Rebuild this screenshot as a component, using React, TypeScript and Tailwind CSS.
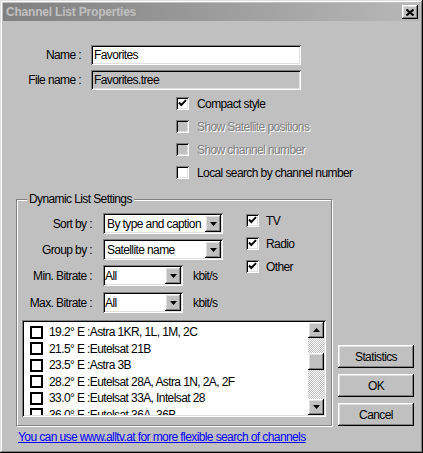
import React from "react";

// Win98-style bevels
const sunken =
  "shadow-[inset_1px_1px_0_#808080,inset_-1px_-1px_0_#ffffff,inset_2px_2px_0_#000000,inset_-2px_-2px_0_#dfdfdf]";
const raised =
  "shadow-[inset_-1px_-1px_0_#000000,inset_1px_1px_0_#ffffff,inset_-2px_-2px_0_#808080,inset_2px_2px_0_#dfdfdf]";

const satellites = [
  "19.2° E :Astra 1KR, 1L, 1M, 2C",
  "21.5° E :Eutelsat 21B",
  "23.5° E :Astra 3B",
  "28.2° E :Eutelsat 28A, Astra 1N, 2A, 2F",
  "33.0° E :Eutelsat 33A, Intelsat 28",
  "36.0° E :Eutelsat 36A, 36B",
];

function Check() {
  return (
    <svg width="9" height="9" viewBox="0 0 9 9" className="absolute left-[2px] top-[2px]">
      <path d="M1 3.5 L3.3 6 L8 1.2" stroke="#000" strokeWidth="1.9" fill="none" />
    </svg>
  );
}

function CheckBox({ checked, disabled }: { checked?: boolean; disabled?: boolean }) {
  return (
    <div
      className={`relative w-[13px] h-[13px] shrink-0 ${sunken} ${
        disabled ? "bg-[#c0c0c0]" : "bg-white"
      }`}
    >
      {checked && <Check />}
    </div>
  );
}

function CheckRow({
  label,
  checked,
  disabled,
}: {
  label: string;
  checked?: boolean;
  disabled?: boolean;
}) {
  return (
    <div className="flex items-center h-[23px] gap-[8px]">
      <CheckBox checked={checked} disabled={disabled} />
      <span
        className={
          disabled ? "text-[#808080] [text-shadow:1px_1px_0_#ffffff]" : "text-black"
        }
      >
        {label}
      </span>
    </div>
  );
}

function DownTriangle() {
  return (
    <svg width="7" height="4" viewBox="0 0 7 4">
      <path d="M0 0 H7 L3.5 4 Z" fill="#000" />
    </svg>
  );
}

function UpTriangle() {
  return (
    <svg width="7" height="4" viewBox="0 0 7 4">
      <path d="M0 4 H7 L3.5 0 Z" fill="#000" />
    </svg>
  );
}

function Combo({ value, width, pad }: { value: string; width: string; pad: string }) {
  return (
    <div className={`relative h-[21px] bg-white flex items-center ${width} ${sunken}`}>
      <span className={`${pad} whitespace-nowrap`}>{value}</span>
      <div
        className={`absolute right-[2px] top-[2px] w-[16px] h-[17px] bg-[#c0c0c0] flex items-center justify-center ${raised}`}
      >
        <DownTriangle />
      </div>
    </div>
  );
}

function Button({ label }: { label: string }) {
  return (
    <div
      className={`w-[76px] h-[23px] bg-[#c0c0c0] flex items-center justify-center ${raised}`}
    >
      {label}
    </div>
  );
}

export default function App() {
  return (
    <div className="w-[423px] h-[453px] bg-[#c0c0c0] p-[3px] flex flex-col font-['Liberation_Sans',Arial,sans-serif] text-[12px] tracking-[-0.6px] leading-[14px] text-black shadow-[inset_-1px_-1px_0_#000000,inset_1px_1px_0_#dfdfdf,inset_-2px_-2px_0_#808080,inset_2px_2px_0_#ffffff]">
      {/* Title bar */}
      <div className="h-[18px] shrink-0 flex items-center justify-between bg-gradient-to-r from-[#808080] to-[#b8b8b8] pl-[3px] pr-[2px]">
        <span className="font-bold text-[#c0c0c0] tracking-[-0.2px]">Channel List Properties</span>
        <div
          className={`w-[16px] h-[14px] bg-[#c0c0c0] flex items-center justify-center ${raised}`}
        >
          <svg width="8" height="7" viewBox="0 0 8 7">
            <path d="M0.5 0.5 L7.5 6.5 M7.5 0.5 L0.5 6.5" stroke="#000" strokeWidth="2" />
          </svg>
        </div>
      </div>

      {/* Name fields */}
      <div className="flex items-center mt-[24px]">
        <span className="w-[78px] text-right">Name :</span>
        <div className={`ml-[10px] w-[210px] h-[20px] bg-white flex items-center pl-[3px] ${sunken}`}>
          Favorites
        </div>
      </div>
      <div className="flex items-center mt-[5px]">
        <span className="w-[78px] text-right">File name :</span>
        <div
          className={`ml-[10px] w-[210px] h-[20px] bg-[#c0c0c0] flex items-center pl-[3px] ${sunken}`}
        >
          Favorites.tree
        </div>
      </div>

      {/* Options */}
      <div className="ml-[173px] mt-[2px] flex flex-col">
        <CheckRow label="Compact style" checked />
        <CheckRow label="Show Satellite positions" disabled />
        <CheckRow label="Show channel number" disabled />
        <CheckRow label="Local search by channel number" />
      </div>

      {/* Group box + buttons */}
      <div className="flex items-start mt-[15px]">
        <div className="relative ml-[13px] w-[316px] h-[227px] border border-[#808080] shadow-[inset_1px_1px_0_#ffffff,1px_1px_0_#ffffff] flex flex-col">
          <span className="absolute -top-[8px] left-[10px] bg-[#c0c0c0] px-[2px]">
            Dynamic List Settings
          </span>

          <div className="flex items-start">
            <div className="flex flex-col pt-[13px]">
              <div className="flex items-center">
                <span className="w-[75px] text-right">Sort by :</span>
                <div className="ml-[11px]">
                  <Combo value="By type and caption" width="w-[120px]" pad="pl-[4px]" />
                </div>
              </div>
              <div className="flex items-center mt-[5px]">
                <span className="w-[75px] text-right">Group by :</span>
                <div className="ml-[11px]">
                  <Combo value="Satellite name" width="w-[120px]" pad="pl-[4px]" />
                </div>
              </div>
              <div className="flex items-center mt-[5px]">
                <span className="w-[75px] text-right">Min. Bitrate :</span>
                <div className="ml-[11px]">
                  <Combo value="All" width="w-[80px]" pad="pl-[2px]" />
                </div>
                <span className="ml-[10px]">kbit/s</span>
              </div>
              <div className="flex items-center mt-[6px]">
                <span className="w-[75px] text-right">Max. Bitrate :</span>
                <div className="ml-[11px]">
                  <Combo value="All" width="w-[80px]" pad="pl-[2px]" />
                </div>
                <span className="ml-[10px]">kbit/s</span>
              </div>
            </div>

            <div className="flex flex-col pt-[9px] ml-[23px]">
              <div className="flex items-center h-[23px] gap-[7px]">
                <CheckBox checked />
                <span>TV</span>
              </div>
              <div className="flex items-center h-[23px] gap-[7px]">
                <CheckBox checked />
                <span>Radio</span>
              </div>
              <div className="flex items-center h-[23px] gap-[7px]">
                <CheckBox checked />
                <span>Other</span>
              </div>
            </div>
          </div>

          {/* Satellite list */}
          <div className={`mt-[7px] ml-[5px] w-[304px] h-[97px] bg-white p-[2px] flex ${sunken}`}>
            <div className="flex-1 overflow-hidden pt-[2px]">
              {satellites.map((s) => (
                <div key={s} className="h-[16.5px] flex items-center pl-[6px] gap-[6px]">
                  <div className="w-[13px] h-[13px] border-2 border-black bg-white shrink-0" />
                  <span className="whitespace-nowrap">{s}</span>
                </div>
              ))}
            </div>
            <div className="w-[16px] flex flex-col bg-[repeating-conic-gradient(#c0c0c0_0%_25%,#ffffff_0%_50%)] bg-[length:2px_2px]">
              <div className={`h-[16px] bg-[#c0c0c0] flex items-center justify-center ${raised}`}>
                <UpTriangle />
              </div>
              <div className={`mt-[15px] h-[17px] bg-[#c0c0c0] ${raised}`} />
              <div className="flex-1" />
              <div className={`h-[16px] bg-[#c0c0c0] flex items-center justify-center ${raised}`}>
                <DownTriangle />
              </div>
            </div>
          </div>
        </div>

        <div className="ml-[6px] mt-[146px] flex flex-col gap-[6px]">
          <Button label="Statistics" />
          <Button label="OK" />
          <Button label="Cancel" />
        </div>
      </div>

      <a href="#" className="ml-[15px] mt-[4px] text-[#0000ff] underline self-start">
        You can use www.alltv.at for more flexible search of channels
      </a>
    </div>
  );
}
